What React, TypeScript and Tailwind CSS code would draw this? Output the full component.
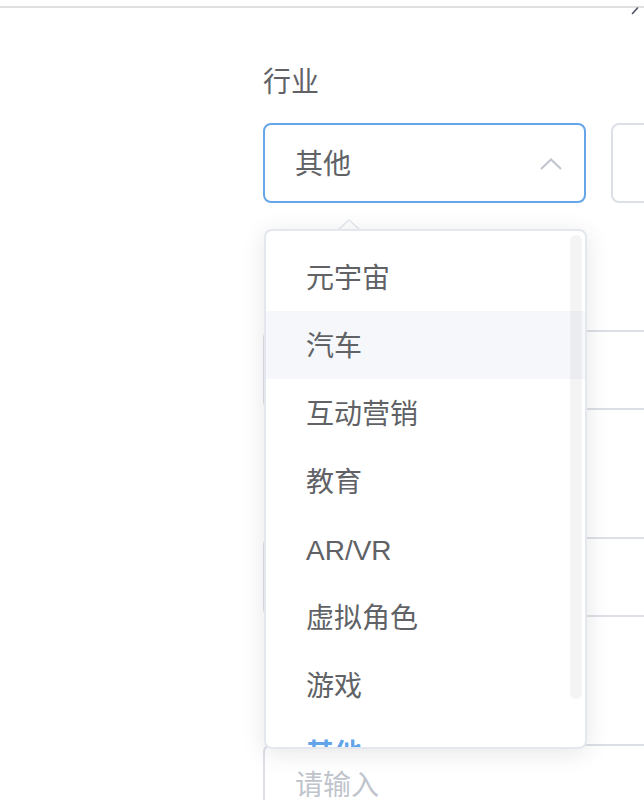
import React from 'react';

const options = ['元宇宙', '汽车', '互动营销', '教育', 'AR/VR', '虚拟角色', '游戏', '其他'];

const ChevronUp: React.FC = () => (
  <svg width="22" height="12" viewBox="0 0 22 12" fill="none" className="mt-[2px]">
    <polyline points="1,11 11,1.5 21,11" stroke="#c0c4cc" strokeWidth="2" />
  </svg>
);

const InputBox: React.FC<{ placeholder?: string }> = ({ placeholder }) => (
  <div className="h-[80px] w-[671px] shrink-0 rounded-[8px] border-2 border-[#dcdfe6] bg-white flex items-center px-[30px]">
    {placeholder && <span className="mt-[4px] text-[28px] text-[#c0c4cc]">{placeholder}</span>}
  </div>
);

const App: React.FC = () => {
  const hovered = 1;
  const selected = 7;

  return (
    <div
      className="relative h-[800px] w-full overflow-hidden bg-white text-[#606266]"
      style={{ fontFamily: '"Liberation Sans", "Noto Sans CJK SC", sans-serif' }}
    >
      {/* top rule */}
      <div className="mt-[6px] h-[2px] bg-[#e0e0e0]" />
      <svg className="absolute left-[631px] top-[7px]" width="8" height="8" viewBox="0 0 8 8">
        <line x1="6.5" y1="1" x2="1.5" y2="6.5" stroke="#4a4f63" strokeWidth="1.6" strokeLinecap="round" />
      </svg>

      {/* form */}
      <div className="flex flex-col pl-[263px] pt-[53px]">
        {/* 行业 */}
        <div className="mb-[65px] flex flex-col">
          <div className="mb-[22px] h-[40px] text-[28px] leading-[44px]">行业</div>
          <div className="flex gap-[25px]">
            <div className="flex h-[80px] w-[323px] shrink-0 items-center justify-between rounded-[8px] border-2 border-[#66a5e8] bg-white pl-[30px] pr-[22px]">
              <span className="mt-[4px] text-[28px]">其他</span>
              <ChevronUp />
            </div>
            <div className="h-[80px] w-[323px] shrink-0 rounded-[8px] border-2 border-[#dcdfe6] bg-white" />
          </div>
        </div>

        <div className="mb-[65px] flex flex-col">
          <div className="mb-[22px] h-[40px]" />
          <InputBox />
        </div>

        <div className="mb-[65px] flex flex-col">
          <div className="mb-[22px] h-[40px]" />
          <InputBox />
        </div>

        <div className="flex flex-col">
          <div className="mb-[22px] h-[40px]" />
          <InputBox placeholder="请输入" />
        </div>
      </div>

      {/* dropdown popper */}
      <div className="absolute left-[264px] top-[229px] w-[323px]">
        <svg className="absolute left-[74px] top-[-10px]" width="22" height="12" viewBox="0 0 22 12">
          <polygon points="0,12 11,1 22,12" fill="#ffffff" />
          <polyline points="0,11 11,1 22,11" fill="none" stroke="#e4e7ed" strokeWidth="1.5" />
        </svg>
        <div className="relative h-[520px] overflow-hidden rounded-[8px] border-2 border-[#e4e7ed] bg-white shadow-[0_4px_24px_rgba(0,0,0,0.1)]">
          <ul className="py-[12px]">
            {options.map((o, i) => (
              <li
                key={o}
                className={`h-[68px] pl-[40px] text-[28px] leading-[72px] ${
                  i === hovered ? 'bg-[#f5f7fa]' : ''
                } ${i === selected ? 'font-bold text-[#62a4ea]' : 'text-[#606266]'}`}
              >
                {o}
              </li>
            ))}
          </ul>
          <div className="absolute right-[3px] top-[4px] h-[464px] w-[12px] rounded-full bg-[#9093991a]" />
        </div>
      </div>
    </div>
  );
};

export default App;
